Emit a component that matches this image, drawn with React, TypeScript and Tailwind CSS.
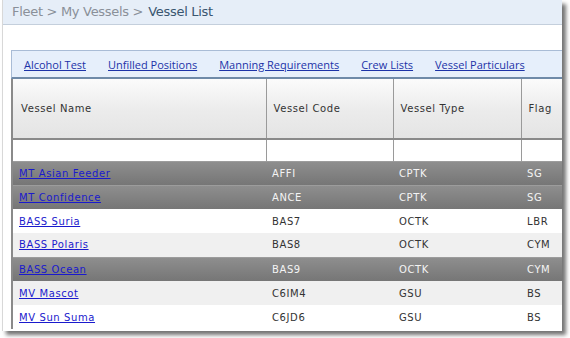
import React from "react";

const rows = [
  { name: "MT Asian Feeder", code: "AFFI", type: "CPTK", flag: "SG", tone: "dark" },
  { name: "MT Confidence", code: "ANCE", type: "CPTK", flag: "SG", tone: "dark" },
  { name: "BASS Suria", code: "BAS7", type: "OCTK", flag: "LBR", tone: "white" },
  { name: "BASS Polaris", code: "BAS8", type: "OCTK", flag: "CYM", tone: "light" },
  { name: "BASS Ocean", code: "BAS9", type: "OCTK", flag: "CYM", tone: "dark" },
  { name: "MV Mascot", code: "C6IM4", type: "GSU", flag: "BS", tone: "light" },
  { name: "MV Sun Suma", code: "C6JD6", type: "GSU", flag: "BS", tone: "white" },
];

const tabs = ["Alcohol Test", "Unfilled Positions", "Manning Requirements", "Crew Lists", "Vessel Particulars"];

const App = () => {
  return (
    <div className="w-[570px] h-[338px] bg-white overflow-hidden pl-[2px]">
      <div className="w-[560px] h-[331px] bg-white border-l border-[#d8d8d8] shadow-[4px_4px_4px_rgba(0,0,0,0.55)] overflow-hidden font-['DejaVu_Sans',sans-serif]">
        <div className="h-[25px] bg-[#e6eef8] border-b border-[#c4cfdc] pl-[9px] flex items-center text-[13px] tracking-[-0.3px] text-[#8a9099]">
          Fleet &gt; My Vessels &gt; <span className="ml-[5px] text-[#3a5670]">Vessel List</span>
        </div>
        <div className="h-[25px]" />
        <div className="ml-[8px]">
          <div className="h-[29px] bg-[#e6effb] border-t border-l border-[#a9bcd6] border-b-2 border-b-[#6f8aa8] flex items-center gap-[22px] pl-[12px] pt-[2px] font-['Open_Sans',sans-serif] text-[11px]">
            {tabs.map((t) => (
              <a key={t} className="text-[#1c33a8] underline">
                {t}
              </a>
            ))}
          </div>
          <table className="border-collapse text-[10px] tracking-[0.6px] w-[552px] table-fixed border-l-2 border-[#8a8a8a]">
            <colgroup>
              <col className="w-[254px]" />
              <col className="w-[127px]" />
              <col className="w-[128px]" />
              <col />
            </colgroup>
            <thead>
              <tr className="h-[60px] bg-gradient-to-b from-[#fbfbfb] via-[#ececec] to-[#e4e4e4] text-[#333]">
                <th className="font-normal text-left pl-[8px] border-r border-[#9a9a9a] border-b-2 border-b-[#8a8a8a]">Vessel Name</th>
                <th className="font-normal text-left pl-[7px] border-r border-[#9a9a9a] border-b-2 border-b-[#8a8a8a]">Vessel Code</th>
                <th className="font-normal text-left pl-[7px] border-r border-[#9a9a9a] border-b-2 border-b-[#8a8a8a]">Vessel Type</th>
                <th className="font-normal text-left pl-[7px] border-b-2 border-b-[#8a8a8a]">Flag</th>
              </tr>
              <tr className="h-[22px] bg-white">
                <td className="border-r border-[#9a9a9a]" />
                <td className="border-r border-[#9a9a9a]" />
                <td className="border-r border-[#9a9a9a]" />
                <td />
              </tr>
            </thead>
            <tbody>
              {rows.map((r) => {
                const dark = r.tone === "dark";
                const bg = dark
                  ? "bg-gradient-to-b from-[#8e8e8e] to-[#767676] border-t border-[#9c9c9c] text-[#f4f4f4]"
                  : r.tone === "light"
                  ? "bg-[#f0f0f0] text-[#333]"
                  : "bg-white text-[#333]";
                return (
                  <tr key={r.name} className={`h-[24px] ${bg}`}>
                    <td className="pl-[6px]">
                      <a className="text-[#1a1acd] underline">{r.name}</a>
                    </td>
                    <td className="pl-[6px]">{r.code}</td>
                    <td className="pl-[6px]">{r.type}</td>
                    <td className="pl-[6px]">{r.flag}</td>
                  </tr>
                );
              })}
            </tbody>
          </table>
        </div>
      </div>
    </div>
  );
};

export default App;
